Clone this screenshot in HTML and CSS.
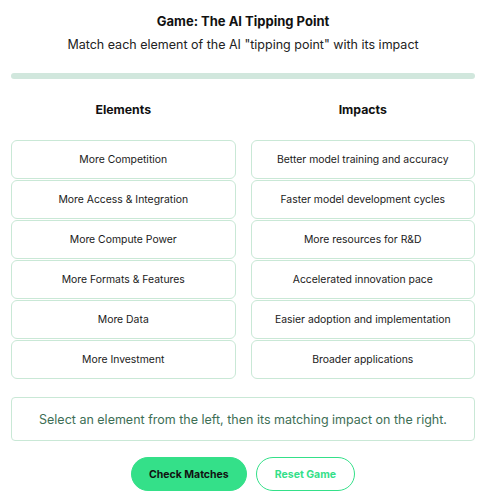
FILE: index.html
```html
<!DOCTYPE html>
<html>
<head>
  <title>Game: The AI Tipping Point</title>
  <link rel="stylesheet" href="styles.css">
</head>
<body>
  <div class="game">
    <h2 class="title">Game: The AI Tipping Point</h2>
    <p class="subtitle">Match each element of the AI "tipping point" with its impact</p>

    <div class="progress"><div class="progress-fill"></div></div>

    <div class="columns">
      <div class="column">
        <h3>Elements</h3>
        <div class="card">More Competition</div>
        <div class="card">More Access &amp; Integration</div>
        <div class="card">More Compute Power</div>
        <div class="card">More Formats &amp; Features</div>
        <div class="card">More Data</div>
        <div class="card">More Investment</div>
      </div>
      <div class="column">
        <h3>Impacts</h3>
        <div class="card">Better model training and accuracy</div>
        <div class="card">Faster model development cycles</div>
        <div class="card">More resources for R&amp;D</div>
        <div class="card">Accelerated innovation pace</div>
        <div class="card">Easier adoption and implementation</div>
        <div class="card">Broader applications</div>
      </div>
    </div>

    <div class="message">Select an element from the left, then its matching impact on the right.</div>

    <div class="buttons">
      <button class="btn btn-primary">Check Matches</button>
      <button class="btn btn-outline">Reset Game</button>
    </div>
  </div>
</body>
</html>
```

FILE: styles.css
```css
* {
  box-sizing: border-box;
}
body {
  margin: 0;
  font-family: Inter, "Noto Sans", sans-serif;
  color: #111;
  background: #fff;
}
.game {
  margin: 0 13px 0 11px;
  padding-top: 12px;
}
.title {
  margin: 0;
  font-size: 13px;
  font-weight: 700;
  text-align: center;
  line-height: 18px;
}
.subtitle {
  margin: 6px 0 0;
  font-size: 12.5px;
  text-align: center;
  line-height: 18px;
  color: #222;
}
.progress {
  margin-top: 19px;
  height: 6px;
  border-radius: 3px;
  background: #d1e7dd;
}
.progress-fill {
  width: 0;
  height: 100%;
}
.columns {
  display: grid;
  grid-template-columns: 1fr 1fr;
  gap: 15px;
  margin-top: 22px;
}
.column h3 {
  margin: 0 0 21px;
  font-size: 12.3px;
  font-weight: 700;
  text-align: center;
  line-height: 18px;
}
.card {
  height: 39px;
  margin-bottom: 1px;
  border: 1px solid #c9e8d6;
  border-radius: 6px;
  display: flex;
  align-items: center;
  justify-content: center;
  font-size: 10.4px;
  color: #1a1a1a;
}
.message {
  margin-top: 17px;
  height: 44px;
  border: 1px solid #c9e8d6;
  border-radius: 4px;
  display: flex;
  align-items: center;
  justify-content: center;
  font-size: 12.5px;
  color: #3d6e55;
}
.buttons {
  display: flex;
  justify-content: center;
  gap: 9px;
  margin-top: 16px;
}
.btn {
  height: 34px;
  padding: 0 17px;
  border-radius: 17px;
  font-family: Inter, sans-serif;
  font-size: 10.5px;
  font-weight: 700;
}
.btn-primary {
  background: #34e089;
  border: 1px solid #34e089;
  color: #111;
}
.btn-outline {
  background: #fff;
  border: 1px solid #34e089;
  color: #34e089;
  padding: 0 18px;
}
```
